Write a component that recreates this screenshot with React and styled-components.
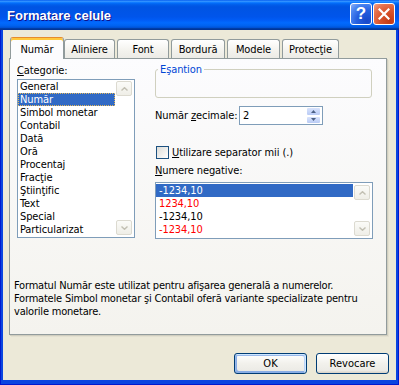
import React from 'react';
import styled, { createGlobalStyle, css } from 'styled-components';

const FONT = `"DejaVu Sans Condensed", "Liberation Sans", sans-serif`;

const Global = createGlobalStyle`
  html, body { margin: 0; padding: 0; background: #ffffff; }
  body { font-family: ${FONT}; font-size: 11px; color: #000; letter-spacing: -0.1px; }
  * { box-sizing: border-box; }
`;

const Window = styled.div`
  width: 399px;
  height: 385px;
  display: flex;
  flex-direction: column;
  background: #0A45E0;
  box-shadow: inset 1px 0 #0019CF, inset -1px 0 #0019CF, inset 0 -1px #0019CF;
`;

const TitleBar = styled.div`
  height: 30px;
  flex: none;
  display: flex;
  align-items: flex-start;
  padding: 0 4px 0 7px;
  background: linear-gradient(180deg, #0058ee 0%, #3593ff 4%, #288eff 6%, #127dff 8%, #036ffc 10%, #0262ee 14%, #0057e5 20%, #0054e3 24%, #0055eb 56%, #005bf5 66%, #026afe 76%, #0062ef 86%, #0052d6 92%, #0040ab 94%, #003092 100%);
`;

const Title = styled.div`
  flex: 1;
  margin-top: 8px;
  font-family: "Liberation Sans", sans-serif;
  font-weight: bold;
  font-size: 13px;
  line-height: 15px;
  letter-spacing: 0;
  color: #fff;
  text-shadow: 1px 1px #0F1089;
`;

const CaptionButton = styled.div`
  width: 22px;
  height: 22px;
  margin-top: 3px;
  margin-left: ${p => (p.$first ? 0 : 1)}px;
  border: 1px solid #fff;
  border-radius: 3px;
  display: flex;
  align-items: center;
  justify-content: center;
  color: #fff;
  font-family: "Liberation Sans", sans-serif;
  font-weight: bold;
  font-size: 17px;
  ${p =>
    p.$kind === 'close'
      ? css`
          background: radial-gradient(circle at 80% 85%, #C33A14 0%, #D9542C 45%, #E67452 75%, #F3A489 100%);
        `
      : css`
          background: radial-gradient(circle at 80% 85%, #1747C9 0%, #2560E0 45%, #4C86F0 75%, #8EB2F7 100%);
        `}
`;

const Body = styled.div`
  flex: 1;
  margin: 0 3px 5px;
  background: #ECE9D8;
  display: flex;
  flex-direction: column;
  padding: 7px 9px 0 6px;
`;

const TabStrip = styled.div`
  height: 21px;
  display: flex;
  align-items: flex-end;
  padding-left: 1px;
  position: relative;
  z-index: 1;
`;

const Tab = styled.div`
  width: ${p => p.$w}px;
  height: ${p => (p.$active ? 22 : 19)}px;
  margin-right: ${p => (p.$active ? 0 : 2)}px;
  margin-bottom: ${p => (p.$active ? -1 : 0)}px;
  display: flex;
  align-items: center;
  justify-content: center;
  border: 1px solid #919B9C;
  border-bottom: none;
  border-radius: 3px 3px 0 0;
  white-space: nowrap;
  background: linear-gradient(180deg, #ffffff, #F3F2ED 60%, #ECEBE6);
  ${p =>
    p.$active &&
    css`
      background: #FCFCFE;
      border-top-color: #E68B2C;
      box-shadow: inset 0 2px #FFC83C;
      padding-top: 1px;
    `}
`;

const Panel = styled.div`
  height: 277px;
  border: 1px solid #919B9C;
  background: linear-gradient(180deg, #FCFCFE, #F4F3EE);
  box-shadow: 1px 1px 0 #D0CEBF, 2px 2px 0 #E3E0D0;
  padding: 4px 0 0 4px;
  display: flex;
  flex-direction: column;
`;

const Columns = styled.div`
  display: flex;
  padding-left: 3px;
`;

const LeftCol = styled.div`
  width: 118px;
  padding-top: 1px;
  display: flex;
  flex-direction: column;
`;

const RightCol = styled.div`
  width: 218px;
  margin-left: 20px;
  display: flex;
  flex-direction: column;
`;

const Label = styled.div`
  height: 13px;
  line-height: 13px;
  white-space: nowrap;
  margin-top: ${p => p.$mt || 0}px;
`;

const U = styled.span`
  text-decoration: underline;
`;

const ListBox = styled.div`
  height: ${p => p.$h}px;
  margin-top: ${p => p.$mt}px;
  border: 1px solid #7F9DB9;
  background: #fff;
  display: flex;
  padding-top: ${p => p.$pt}px;
`;

const Items = styled.div`
  flex: 1;
  min-width: 0;
  display: flex;
  flex-direction: column;
`;

const Item = styled.div`
  height: 13px;
  line-height: 13px;
  padding-left: ${p => p.$pl}px;
  white-space: nowrap;
  color: ${p => (p.$selected ? '#fff' : p.$red ? '#FF0000' : '#000')};
  background: ${p => (p.$selected ? '#316AC5' : 'transparent')};
  ${p =>
    p.$focus &&
    css`
      outline: 1px dotted #E3B75A;
      outline-offset: -1px;
    `}
`;

const ScrollBar = styled.div`
  width: 16px;
  margin: 0 2px 0 1px;
  padding: 1px 0 2px;
  display: flex;
  flex-direction: column;
  justify-content: space-between;
`;

const ScrollBtn = styled.div`
  width: 16px;
  height: 15px;
  border: 1px solid #DCDAD0;
  border-radius: 2px;
  background: linear-gradient(180deg, #FBFBF8, #EFEEE7);
  display: flex;
  align-items: center;
  justify-content: center;
`;

const GroupBox = styled.fieldset`
  margin: 0;
  padding: 0;
  width: 217px;
  height: 35px;
  border: 1px solid #D0D0BF;
  border-radius: 3px;
  min-inline-size: 0;
`;

const Legend = styled.legend`
  margin-left: 2px;
  padding: 0 2px;
  line-height: 13px;
  color: #0046D5;
`;

const FieldRow = styled.div`
  display: flex;
  align-items: center;
  margin-top: ${p => p.$mt}px;
`;

const FieldLabel = styled.div`
  width: 84px;
  white-space: nowrap;
`;

const SpinBox = styled.div`
  width: 84px;
  height: 19px;
  border: 1px solid #7F9DB9;
  background: #fff;
  display: flex;
`;

const SpinText = styled.div`
  flex: 1;
  padding-left: 3px;
  line-height: 17px;
`;

const SpinButtons = styled.div`
  width: 15px;
  margin: 0 1px 0 0;
  display: flex;
  flex-direction: column;
`;

const SpinBtn = styled.div`
  flex: 1;
  border: 1px solid #fff;
  border-radius: 2px;
  background: linear-gradient(180deg, #D9E3FC, #B9CBF5);
  display: flex;
  align-items: center;
  justify-content: center;
`;

const CheckBox = styled.div`
  width: 13px;
  height: 13px;
  margin-left: 1px;
  margin-right: 3px;
  border: 1px solid #1C5180;
  background: linear-gradient(135deg, #DCDCD7, #ffffff);
`;

const Description = styled.div`
  margin-top: 40px;
  line-height: 13px;
  white-space: nowrap;
  letter-spacing: -0.2px;
`;

const ButtonRow = styled.div`
  margin-top: 18px;
  margin-right: -2px;
  display: flex;
  justify-content: flex-end;
  gap: 9px;
`;

const Button = styled.button`
  width: 73px;
  height: 21px;
  padding: 0;
  font-family: ${FONT};
  font-size: 11px;
  color: #000;
  border: 1px solid #003C74;
  border-radius: 3px;
  background: linear-gradient(180deg, #ffffff, #F2F1EC 50%, #ECEBE6 86%, #D6D0C5);
  ${p =>
    p.$default &&
    css`
      box-shadow: inset -1px 1px #CEE7FF, inset 1px 2px #98B8EA, inset -2px 2px #BCD4F6, inset 1px -1px #89ADE4, inset 2px -2px #89ADE4;
    `}
`;

const Arrow = ({ down, color = '#C2C0B3' }) => (
  <svg width="7" height="4" viewBox="0 0 7 4">
    <path
      d={down ? 'M0.5 0.5 L3.5 3.3 L6.5 0.5' : 'M0.5 3.5 L3.5 0.7 L6.5 3.5'}
      fill="none"
      stroke={color}
      strokeWidth="1.4"
    />
  </svg>
);

const Tri = ({ down }) => (
  <svg width="5" height="3" viewBox="0 0 5 3">
    <path d={down ? 'M0 0 H5 L2.5 3 Z' : 'M0 3 H5 L2.5 0 Z'} fill="#4D6185" />
  </svg>
);

const categories = [
  'General',
  'Număr',
  'Simbol monetar',
  'Contabil',
  'Dată',
  'Oră',
  'Procentaj',
  'Fracţie',
  'Ştiinţific',
  'Text',
  'Special',
  'Particularizat',
];

const negatives = [
  { t: '-1234,10', sel: true },
  { t: '1234,10', red: true },
  { t: '-1234,10' },
  { t: '-1234,10', red: true },
];

const tabs = [
  { t: 'Număr', w: 54, active: true },
  { t: 'Aliniere', w: 51 },
  { t: 'Font', w: 52 },
  { t: 'Bordură', w: 54 },
  { t: 'Modele', w: 53 },
  { t: 'Protecţie', w: 57 },
];

const Scroll = () => (
  <ScrollBar>
    <ScrollBtn>
      <Arrow />
    </ScrollBtn>
    <ScrollBtn>
      <Arrow down />
    </ScrollBtn>
  </ScrollBar>
);

export default function App() {
  return (
    <>
      <Global />
      <Window>
        <TitleBar>
          <Title>Formatare celule</Title>
          <CaptionButton $first $kind="help">?</CaptionButton>
          <CaptionButton $kind="close">
            <svg width="12" height="12" viewBox="0 0 12 12">
              <path d="M1.5 1.5 L10.5 10.5 M10.5 1.5 L1.5 10.5" stroke="#fff" strokeWidth="2.2" strokeLinecap="square" />
            </svg>
          </CaptionButton>
        </TitleBar>
        <Body>
          <TabStrip>
            {tabs.map(tab => (
              <Tab key={tab.t} $w={tab.w} $active={tab.active}>
                {tab.t}
              </Tab>
            ))}
          </TabStrip>
          <Panel>
            <Columns>
              <LeftCol>
                <Label>
                  <U>C</U>ategorie:
                </Label>
                <ListBox $h={159} $mt={2} $pt={0}>
                  <Items>
                    {categories.map((c, i) => (
                      <Item key={c} $pl={2} $selected={i === 1} $focus={i === 1}>
                        {c}
                      </Item>
                    ))}
                  </Items>
                  <Scroll />
                </ListBox>
              </LeftCol>
              <RightCol>
                <GroupBox>
                  <Legend>Eşantion</Legend>
                </GroupBox>
                <FieldRow $mt={8}>
                  <FieldLabel>
                    Număr <U>z</U>ecimale:
                  </FieldLabel>
                  <SpinBox>
                    <SpinText>2</SpinText>
                    <SpinButtons>
                      <SpinBtn>
                        <Tri />
                      </SpinBtn>
                      <SpinBtn>
                        <Tri down />
                      </SpinBtn>
                    </SpinButtons>
                  </SpinBox>
                </FieldRow>
                <FieldRow $mt={21}>
                  <CheckBox />
                  <span>
                    <U>U</U>tilizare separator mii (.)
                  </span>
                </FieldRow>
                <Label $mt={5}>
                  <U>N</U>umere negative:
                </Label>
                <ListBox $h={57} $mt={5} $pt={1}>
                  <Items>
                    {negatives.map((n, i) => (
                      <Item key={i} $pl={3} $selected={n.sel} $red={n.red}>
                        {n.t}
                      </Item>
                    ))}
                  </Items>
                  <Scroll />
                </ListBox>
              </RightCol>
            </Columns>
            <Description>
              Formatul Număr este utilizat pentru afişarea generală a numerelor.
              <br />
              Formatele Simbol monetar şi Contabil oferă variante specializate pentru
              <br />
              valorile monetare.
            </Description>
          </Panel>
          <ButtonRow>
            <Button $default>OK</Button>
            <Button>Revocare</Button>
          </ButtonRow>
        </Body>
      </Window>
    </>
  );
}
